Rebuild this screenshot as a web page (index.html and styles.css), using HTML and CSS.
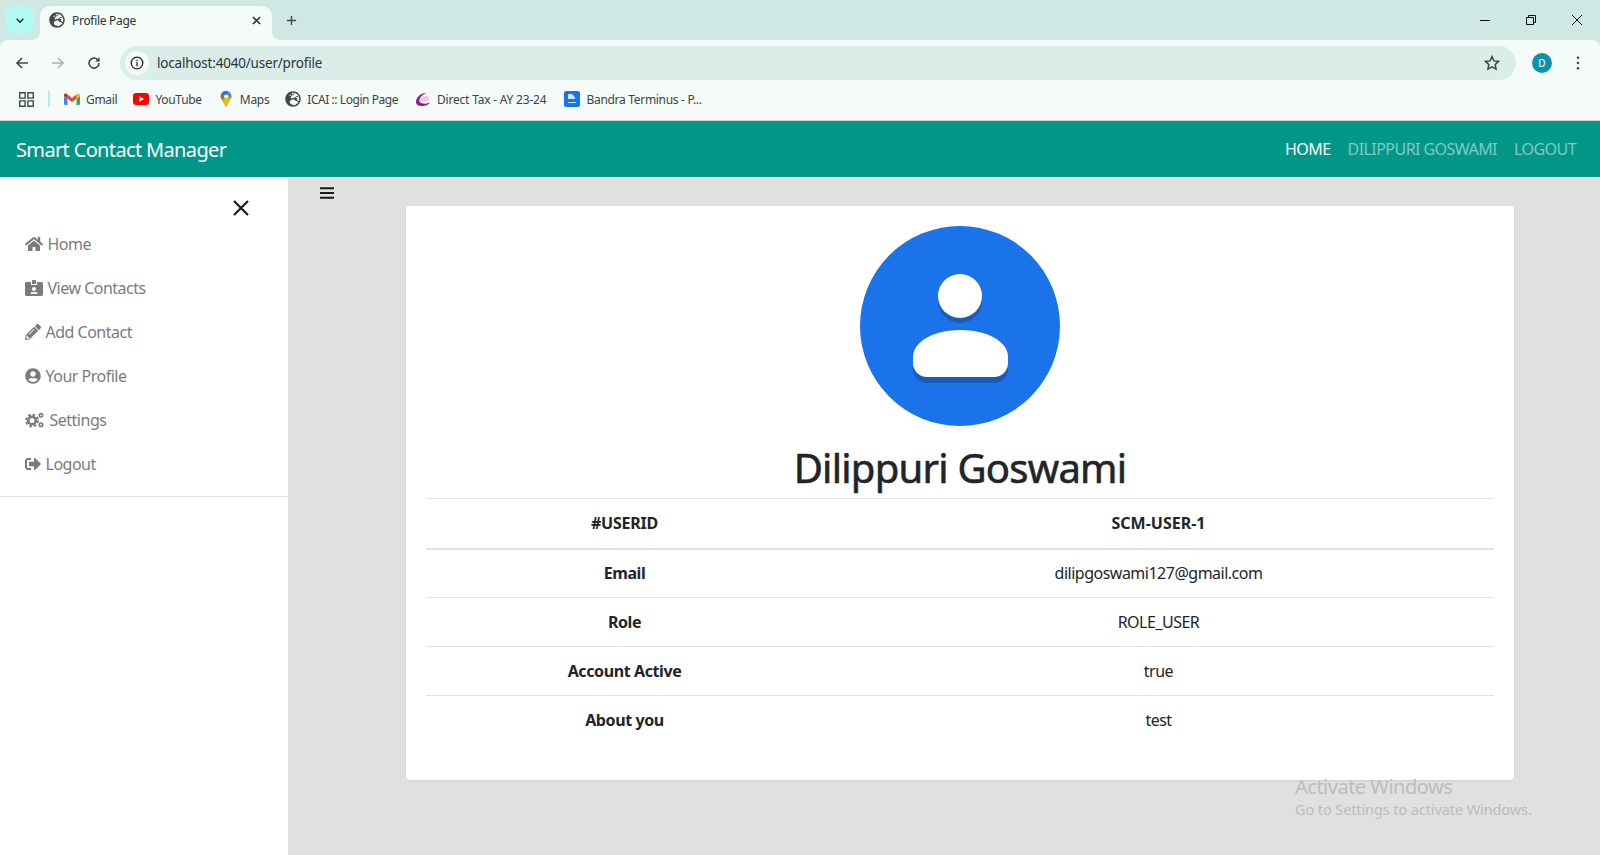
FILE: index.html
```html
<!DOCTYPE html>
<html lang="en">
<head>
<meta charset="utf-8">
<title>Profile Page</title>
<link rel="stylesheet" href="styles.css">
</head>
<body>
<header class="browser">
  <div class="tabstrip">
    <button class="tab-search"><svg viewBox="0 0 12 8" class="i-chev"><path d="M2 2l4 4 4-4" fill="none" stroke="#1f2b2a" stroke-width="1.8"/></svg></button>
    <div class="tab">
      <svg class="i-16" viewBox="0 0 496 512"><use href="#globe"/></svg>
      <span class="tab-title">Profile Page</span>
      <svg class="i-tabx" viewBox="0 0 10 10"><path d="M1 1l8 8M9 1l-8 8" stroke="#1f2b2a" stroke-width="1.6"/></svg>
    </div>
    <svg class="i-plus" viewBox="0 0 12 12"><path d="M6 1v10M1 6h10" stroke="#3c4a48" stroke-width="1.5"/></svg>
    <div class="win-controls">
      <svg viewBox="0 0 12 12"><path d="M1 6.5h10" stroke="#111" stroke-width="1"/></svg>
      <svg viewBox="0 0 12 12"><path d="M1.5 3.5h7v7h-7zM3.5 3.5v-2h7v7h-2" fill="none" stroke="#111" stroke-width="1"/></svg>
      <svg viewBox="0 0 12 12"><path d="M1 1l10 10M11 1L1 11" stroke="#111" stroke-width="1"/></svg>
    </div>
  </div>
  <div class="toolbar">
    <svg class="i-nav" viewBox="0 0 14 14"><path d="M13 7H2M7 2L2 7l5 5" fill="none" stroke="#3c4a48" stroke-width="1.6"/></svg>
    <svg class="i-nav" viewBox="0 0 14 14"><path d="M1 7h11M7 2l5 5-5 5" fill="none" stroke="#a9b3b1" stroke-width="1.6"/></svg>
    <svg class="i-nav" viewBox="0 0 14 14"><path d="M12 7a5 5 0 1 1-1.5-3.5L12 5" fill="none" stroke="#3c4a48" stroke-width="1.6"/><path d="M12.6 1v4.600h-4.600z" fill="#3c4a48"/></svg>
    <div class="omnibox">
      <span class="site-info"><svg viewBox="0 0 14 14"><circle cx="7" cy="7" r="5.800" fill="none" stroke="#222" stroke-width="1.300"/><path d="M7 6.200v4M7 3.800v1.400" stroke="#222" stroke-width="1.300"/></svg></span>
      <span class="url">localhost:4040/user/profile</span>
      <svg class="i-star" viewBox="0 0 24 24"><path d="M12 3.500l2.600 5.700 6.200.7-4.600 4.200 1.300 6.100L12 17.200l-5.500 3 1.300-6.100-4.600-4.200 6.200-.7z" fill="none" stroke="#3c4a48" stroke-width="2"/></svg>
    </div>
    <span class="avatar">D</span>
    <svg class="i-more" viewBox="0 0 4 16"><circle cx="2" cy="2" r="1.500"/><circle cx="2" cy="8" r="1.500"/><circle cx="2" cy="14" r="1.500"/></svg>
  </div>
  <div class="bookmarks">
    <svg class="i-apps" viewBox="0 0 14 14"><path d="M.7.700h5v5h-5zM8.300.700h5v5h-5zM.7 8.300h5v5h-5zM8.300 8.300h5v5h-5z" fill="none" stroke="#3c4a48" stroke-width="1.300"/></svg>
    <span class="bm-sep"></span>
    <span class="bm"><svg class="i-16" viewBox="0 0 16 12"><path d="M0 3v8a1 1 0 0 0 1 1h2.500V5.500z" fill="#4285f4"/><path d="M16 3v8a1 1 0 0 1-1 1h-2.500V5.500z" fill="#34a853"/><path d="M12.500 1v4.500L16 3V2a1.500 1.500 0 0 0-2.400-1.200z" fill="#fbbc04"/><path d="M3.500 5.500V1.500L8 5l4.500-3.500v4L8 9z" fill="#ea4335"/><path d="M0 2v1l3.500 2.500v-4L2.400.8A1.500 1.500 0 0 0 0 2z" fill="#c5221f"/></svg>Gmail</span>
    <span class="bm"><svg class="i-16" viewBox="0 0 16 12"><rect width="16" height="12" rx="3" fill="#f00"/><path d="M6.300 3.200v5.600L11 6z" fill="#fff"/></svg>YouTube</span>
    <span class="bm"><svg class="i-16" viewBox="0 0 12 18"><path d="M6 0a6 6 0 0 0-6 6c0 2 1 3.400 2 4.600L6 18l4-7.400c1-1.200 2-2.600 2-4.600a6 6 0 0 0-6-6z" fill="#34a853"/><path d="M6 0a6 6 0 0 1 6 6c0 1-.3 1.900-.7 2.700L3 2z" fill="#4285f4"/><path d="M6 0a6 6 0 0 0-4.500 2L4 4.500A2.500 2.500 0 0 1 6 3.500L8.500 1z" fill="#1a73e8"/><path d="M1.500 2A6 6 0 0 0 0 6c0 1 .3 1.900.7 2.700L4 4.500z" fill="#ea4335"/><path d="M2 10.600L8 4l3.300 4.700-5.300 9.300z" fill="#fbbc04" opacity=".9"/><circle cx="6" cy="6" r="2.100" fill="#fff"/></svg>Maps</span>
    <span class="bm bm-tight"><svg class="i-16" viewBox="0 0 496 512"><use href="#globe"/></svg>ICAI :: Login Page</span>
    <span class="bm bm-wide"><svg class="i-16" viewBox="0 0 16 16"><path d="M11 2C6 2 1 6 1 11c0 3 3 4 6 4 3 0 7-1 8-4-2 2-6 2-9 1-2-1-2-3-1-5 1-2 4-4 6-5z" fill="#8e1a9a"/><path d="M9 5c3-1 5 1 5 3s-3 3-6 3-4-1-3-3 2-2 4-3z" fill="#f0c9e6"/></svg>Direct Tax - AY 23-24</span>
    <span class="bm"><svg class="i-16" viewBox="0 0 16 16"><rect width="16" height="16" rx="2" fill="#1a73e8"/><path d="M4 3h4l3 3v2H4zM4 11h8v1H4z" fill="#cfe2fc"/></svg>Bandra Terminus - P...</span>
  </div>
</header>

<nav class="navbar">
  <span class="brand">Smart Contact Manager</span>
  <ul class="nav-links">
    <li class="active">HOME</li>
    <li>DILIPPURI GOSWAMI</li>
    <li>LOGOUT</li>
  </ul>
</nav>

<main class="layout">
  <aside class="sidebar">
    <div class="side-close"><svg viewBox="0 0 16 16"><path d="M1 1l14 14M15 1L1 15" stroke="#1a1a1a" stroke-width="2.200"/></svg></div>
    <ul class="side-menu">
      <li><svg class="mi mi-w" viewBox="0 0 576 512"><path d="M280.37 148.26L96 300.11V464a16 16 0 0 0 16 16l112.06-.29a16 16 0 0 0 15.92-16V368a16 16 0 0 1 16-16h64a16 16 0 0 1 16 16v95.64a16 16 0 0 0 16 16.05L464 480a16 16 0 0 0 16-16V300L295.67 148.26a12.19 12.19 0 0 0-15.3 0zM571.6 251.47L488 182.56V44.05a12 12 0 0 0-12-12h-56a12 12 0 0 0-12 12v72.61L318.47 43a48 48 0 0 0-61 0L4.34 251.47a12 12 0 0 0-1.6 16.9l25.5 31A12 12 0 0 0 45.15 301l235.22-193.74a12.19 12.19 0 0 1 15.3 0L530.9 301a12 12 0 0 0 16.9-1.6l25.5-31a12 12 0 0 0-1.7-16.93z"/></svg>Home</li>
      <li><svg class="mi mi-w" viewBox="0 0 576 512"><path d="M528 64H384v96H192V64H48C21.5 64 0 85.5 0 112v352c0 26.5 21.5 48 48 48h480c26.5 0 48-21.5 48-48V112c0-26.5-21.5-48-48-48zM288 224c35.3 0 64 28.7 64 64s-28.700 64-64 64-64-28.700-64-64 28.700-64 64-64zm93.300 224H194.700c-10.400 0-18.800-10-15.600-19.800 8.300-25.600 32.400-44.200 60.900-44.200h8.200c12.300 5.100 25.700 8 39.800 8s27.600-2.900 39.800-8h8.200c28.400 0 52.500 18.500 60.900 44.200 3.200 9.800-5.200 19.800-15.600 19.800zM352 32c0-17.700-14.300-32-32-32h-64c-17.700 0-32 14.300-32 32v96h128V32z"/></svg>View Contacts</li>
      <li><svg class="mi" viewBox="0 0 512 512"><path d="M497.900 142.100l-46.100 46.100c-4.700 4.700-12.300 4.700-17 0l-111-111c-4.700-4.700-4.700-12.300 0-17l46.100-46.100c18.700-18.700 49.100-18.700 67.900 0l60.100 60.100c18.800 18.700 18.800 49.100 0 67.900zM284.200 99.800L21.600 362.400.4 483.900c-2.900 16.400 11.400 30.600 27.800 27.800l121.500-21.300 262.600-262.600c4.700-4.700 4.700-12.300 0-17l-111-111c-4.800-4.700-12.400-4.700-17.100 0zM124.100 339.900c-5.500-5.500-5.500-14.300 0-19.800l154-154c5.500-5.500 14.300-5.500 19.800 0s5.500 14.300 0 19.800l-154 154c-5.500 5.500-14.300 5.500-19.800 0zM88 424h48v36.300l-64.500 11.300-31.100-31.100L51.700 376H88v48z"/></svg>Add Contact</li>
      <li><svg class="mi" viewBox="0 0 496 512"><path d="M248 8C111 8 0 119 0 256s111 248 248 248 248-111 248-248S385 8 248 8zm0 96c48.600 0 88 39.400 88 88s-39.400 88-88 88-88-39.400-88-88 39.400-88 88-88zm0 344c-58.700 0-111.300-26.600-146.500-68.200 18.800-35.400 55.600-59.800 98.500-59.800 2.400 0 4.800.4 7.100 1.100 13 4.200 26.600 6.900 40.900 6.900 14.300 0 28-2.700 40.900-6.900 2.300-.7 4.700-1.100 7.100-1.100 42.900 0 79.700 24.400 98.500 59.800C359.300 421.400 306.700 448 248 448z"/></svg>Your Profile</li>
      <li><svg class="mi mi-cog" viewBox="0 0 20 16"><circle cx="7" cy="8.500" r="3.800" fill="none" stroke="#7b7b7b" stroke-width="2.600"/><circle cx="7" cy="8.500" r="5.800" fill="none" stroke="#7b7b7b" stroke-width="2.200" stroke-dasharray="2.500 2.050"/><circle cx="16" cy="3.300" r="1.700" fill="none" stroke="#7b7b7b" stroke-width="1.700"/><circle cx="16" cy="12.700" r="1.700" fill="none" stroke="#7b7b7b" stroke-width="1.700"/></svg>Settings</li>
      <li><svg class="mi" viewBox="0 0 512 512"><path d="M497 273L329 441c-15 15-41 4.500-41-17v-96H152c-13.300 0-24-10.700-24-24v-96c0-13.300 10.700-24 24-24h136V88c0-21.400 25.900-32 41-17l168 168c9.300 9.400 9.300 24.600 0 34zM192 436v-40c0-6.600-5.400-12-12-12H96c-17.700 0-32-14.300-32-32V160c0-17.700 14.300-32 32-32h84c6.600 0 12-5.400 12-12V76c0-6.600-5.400-12-12-12H96c-53 0-96 43-96 96v192c0 53 43 96 96 96h84c6.600 0 12-5.400 12-12z"/></svg>Logout</li>
    </ul>
  </aside>
  <section class="content">
    <svg class="bars" viewBox="0 0 14 12"><path d="M0 1.200h14M0 6h14M0 10.800h14" stroke="#1a1a1a" stroke-width="2"/></svg>
    <div class="card">
      <svg class="photo" viewBox="0 0 200 200">
        <circle cx="100" cy="100" r="100" fill="#1a73e8"/>
        <circle cx="100" cy="75" r="22" fill="#1a5cb6"/>
        <path d="M53 137c0-16 22-27 47.500-27S148 121 148 137v6a14 14 0 0 1-14 14H67a14 14 0 0 1-14-14z" fill="#1a5cb6"/>
        <circle cx="100" cy="70" r="22" fill="#fff"/>
        <path d="M53 131c0-16 22-27 47.500-27S148 115 148 131v6a14 14 0 0 1-14 14H67a14 14 0 0 1-14-14z" fill="#fff"/>
      </svg>
      <h1 class="name">Dilippuri Goswami</h1>
      <table class="info">
        <thead>
          <tr><th class="c1">#USERID</th><th>SCM-USER-1</th></tr>
        </thead>
        <tbody>
          <tr><th>Email</th><td>dilipgoswami127@gmail.com</td></tr>
          <tr><th>Role</th><td>ROLE_USER</td></tr>
          <tr><th>Account Active</th><td>true</td></tr>
          <tr><th>About you</th><td>test</td></tr>
        </tbody>
      </table>
    </div>
  </section>
</main>

<div class="activate">
  <div class="a-title">Activate Windows</div>
  <div class="a-sub">Go to Settings to activate Windows.</div>
</div>

<svg class="defs" width="0" height="0"><defs><path id="globe" fill="#3f4a48" d="M248 8C111 8 0 119 0 256s111 248 248 248 248-111 248-248S385 8 248 8zm200 248c0 22.500-3.900 44.200-10.800 64.400h-20.300c-4.300 0-8.400-1.700-11.400-4.800l-32-32.600c-4.500-4.600-4.500-12.100.1-16.700l12.500-12.500v-8.700c0-3-1.200-5.900-3.300-8l-9.400-9.400c-2.100-2.100-5-3.300-8-3.300h-16c-6.200 0-11.300-5.100-11.300-11.300 0-3 1.200-5.900 3.300-8l9.400-9.400c2.100-2.100 5-3.300 8-3.300h32c6.200 0 11.300-5.100 11.300-11.300v-9.400c0-6.200-5.100-11.300-11.300-11.300h-36.700c-8.800 0-16 7.200-16 16v4.500c0 6.900-4.400 13-10.900 15.200l-31.600 10.500c-3.300 1.100-5.500 4.100-5.500 7.600v2.200c0 4.400-3.600 8-8 8h-16c-4.400 0-8-3.600-8-8s-3.600-8-8-8H247c-3 0-5.800 1.700-7.200 4.400l-9.400 18.700c-2.700 5.400-8.200 8.800-14.300 8.800H194c-8.800 0-16-7.200-16-16V199c0-4.200 1.700-8.300 4.700-11.300l20.100-20.100c4.600-4.600 7.200-10.900 7.200-17.500 0-3.400 2.200-6.500 5.500-7.600l40-13.300c1.700-.6 3.200-1.500 4.400-2.700l26.800-26.800c2.100-2.100 3.300-5 3.300-8 0-6.200-5.100-11.300-11.300-11.300H258l-16 16v8c0 4.400-3.600 8-8 8h-16c-4.400 0-8-3.600-8-8v-20c0-2.500 1.200-4.900 3.200-6.400l28.900-21.700c1.900-.1 3.800-.3 5.700-.3C358.300 56 448 145.700 448 256zM130.100 149.100c0-3 1.200-5.900 3.300-8l25.400-25.400c2.100-2.100 5-3.300 8-3.300 6.200 0 11.300 5.100 11.300 11.300v16c0 3-1.200 5.900-3.300 8l-9.400 9.400c-2.100 2.100-5 3.300-8 3.300h-16c-6.200 0-11.300-5.100-11.300-11.300zm128 306.400v-7.100c0-8.800-7.200-16-16-16h-20.200c-10.800 0-26.700-5.300-35.400-11.800l-22.200-16.700c-11.500-8.600-18.200-22.100-18.200-36.400v-23.900c0-16 8.400-30.800 22.100-39l42.900-25.700c7.100-4.200 15.200-6.500 23.400-6.500h31.200c10.900 0 21.400 3.900 29.700 10.900l43.200 37.100h18.300c8.500 0 16.600 3.400 22.600 9.400l17.300 17.300c3.400 3.400 8.100 5.300 12.900 5.300H423c-32.400 58.900-93.800 99.500-164.900 103.100z"/></defs></svg>
</body>
</html>
```

FILE: styles.css
```css
* { box-sizing: border-box; }
html, body { margin: 0; height: 855px; overflow: hidden; }
body {
  font-family: "Noto Sans", "Open Sans", "Liberation Sans", sans-serif;
  font-size: 16px;
  background: #e0e0e0;
  color: #212529;
  position: relative;
  display: flex;
  flex-direction: column;
}

/* browser chrome */
.browser { flex: none; height: 121px; background: #cfe8e3; border-bottom: 1px solid #d0d4d3; }
.tabstrip { height: 40px; display: flex; align-items: flex-end; padding-left: 6px; position: relative; }
.tab-search { width: 28px; height: 28px; margin-bottom: 6px; border: 0; padding: 0; border-radius: 9px; background: #b3fbf2; display: flex; align-items: center; justify-content: center; }
.i-chev { width: 10px; height: 7px; }
.tab { position: relative; z-index: 1; width: 232px; height: 34px; margin-left: 6px; background: #f5fbf9; border-radius: 10px 10px 0 0; display: flex; align-items: center; padding: 0 11px 6px 9px; }
.tab::before, .tab::after { content: ""; position: absolute; bottom: 0; width: 8px; height: 8px; }
.tab::before { left: -8px; background: radial-gradient(circle at 0 0, transparent 7.5px, #f5fbf9 8px); }
.tab::after { right: -8px; background: radial-gradient(circle at 100% 0, transparent 7.5px, #f5fbf9 8px); }
.tab-title { font-size: 12px; letter-spacing: -.3px; margin-left: 7px; flex: 1; color: #2b3533; }
.i-16 { width: 16px; height: 16px; flex: none; }
.i-tabx { width: 9px; height: 9px; }
.i-plus { width: 11px; height: 11px; margin: 0 0 14px 14px; }
.win-controls { margin-left: auto; height: 40px; display: flex; align-items: center; gap: 34px; padding-right: 17px; align-self: flex-start; }
.win-controls svg { width: 12px; height: 12px; }

.toolbar { height: 40px; display: flex; align-items: center; padding: 6px 0 0 15px; background: #f5fbf9; border-radius: 8px 8px 0 0; }
.i-nav { width: 14px; height: 14px; margin-right: 22px; }
.omnibox { width: 1396px; height: 34px; margin-left: -3px; background: #daede8; border-radius: 17px; display: flex; align-items: center; padding: 0 15px 0 5px; }
.site-info { width: 24px; height: 24px; border-radius: 50%; background: #f5fbf9; display: flex; align-items: center; justify-content: center; }
.site-info svg { width: 14px; height: 14px; }
.url { margin-left: 8px; font-size: 13.500px; letter-spacing: -.2px; color: #2b3533; flex: 1; }
.i-star { width: 18px; height: 18px; }
.avatar { width: 20px; height: 20px; margin-left: 16px; border-radius: 50%; background: #0a93a8; color: #fff; font-size: 10px; display: flex; align-items: center; justify-content: center; }
.i-more { width: 4px; height: 14px; margin-left: 24px; fill: #3c4a48; }

.bookmarks { height: 40px; display: flex; align-items: center; padding: 0 0 2px 19px; font-size: 12px; letter-spacing: -.3px; color: #3a4442; background: #f5fbf9; }
.i-apps { width: 15px; height: 15px; }
.bm-sep { width: 2px; height: 16px; background: #a5f3ea; margin: 0 14px 0 14px; }
.bm { display: flex; align-items: center; gap: 6px; margin-right: 16px; white-space: nowrap; }
.bm-tight { letter-spacing: -.45px; margin-right: 17px; }
.bm-wide { letter-spacing: -.2px; margin-right: 18px; }

/* navbar */
.navbar { flex: none; height: 56px; background: #009688; display: flex; align-items: center; justify-content: space-between; padding: 0 24px 0 16px; }
.brand { color: #fff; font-size: 20px; letter-spacing: -.65px; }
.nav-links { list-style: none; margin: 0; padding: 0; display: flex; gap: 17px; font-size: 16px; letter-spacing: -.55px; color: rgba(255,255,255,.5); }
.nav-links .active { color: #fff; }

/* page */
.layout { flex: 1; display: flex; min-height: 0; }
.sidebar { flex: none; width: 288px; background: #fff; }
.side-close { height: 45px; padding: 23px 0 0 233px; }
.side-close svg { display: block; width: 16px; height: 16px; }
.side-menu { list-style: none; margin: 0; padding: 0 0 10px; border-bottom: 1px solid #e3e3e3; font-size: 16px; letter-spacing: -.5px; color: #7b7b7b; }
.side-menu li { height: 44px; padding-left: 25px; display: flex; align-items: center; gap: 4.500px; }
.mi { width: 16px; height: 16px; fill: #7b7b7b; }
.mi-w { width: 18px; }
.mi-cog { width: 20px; }
.content { flex: 1; position: relative; padding: 29px 86px 0 118px; }
.bars { position: absolute; left: 32px; top: 10px; width: 14px; height: 12px; }
.card { width: 1108px; height: 574px; background: #fff; border-radius: 3px; padding: 20px 20px 0; box-shadow: 0 1px 2px rgba(0,0,0,.08); text-align: center; }
.photo { display: block; width: 200px; height: 200px; margin: 0 auto; }
.name { margin: 18px 0 0; height: 54px; font-size: 40px; line-height: 48px; font-weight: 400; letter-spacing: -.75px; color: #212529; -webkit-text-stroke: .6px #212529; }
.info { width: 1068px; table-layout: fixed; border-collapse: collapse; font-size: 16px; letter-spacing: -.5px; color: #212529; }
.info th, .info td { height: 49px; padding: 0; text-align: center; border-top: 1px solid #dee2e6; font-weight: 400; }
.info th { font-weight: 700; letter-spacing: -.4px; }
.info thead th { height: 50px; border-bottom: 2px solid #dee2e6; letter-spacing: 0; }
.info thead .c1 { letter-spacing: -.2px; }
.info tbody tr:first-child th, .info tbody tr:first-child td { border-top: 0; }
.c1 { width: 397px; }

.activate { position: absolute; left: 1295px; top: 774px; color: #bdbdbd; white-space: nowrap; }
.a-title { font-size: 20px; line-height: 25px; letter-spacing: -.5px; }
.a-sub { font-size: 14.500px; line-height: 20px; letter-spacing: -.1px; }
.defs { position: absolute; }
```
